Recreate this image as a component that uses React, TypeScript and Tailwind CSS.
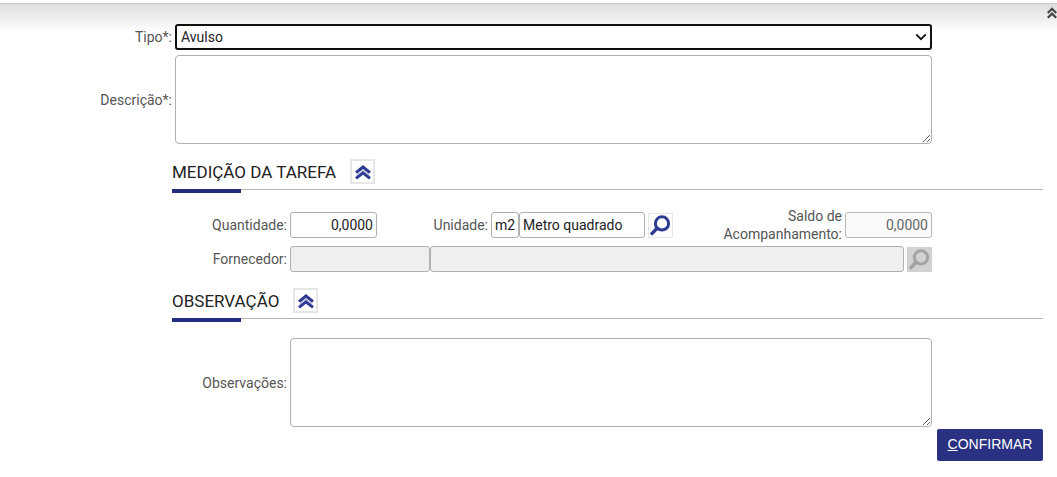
import { useState } from 'react'
import type { ReactNode } from 'react'

const fieldStyle = "h-[26px] min-w-0 rounded-[3px] border border-[#b0b0b0] bg-white text-sm text-[#222] outline-none";

const ChevronsUp = () => (
  <svg viewBox="0 0 16 16" className="h-4 w-4 shrink-0" fill="none" stroke="currentColor" strokeWidth="3" aria-hidden="true">
    <path d="M1 8.6 8 3l7 5.6" />
    <path d="M1 14.4 8 8.8l7 5.6" />
    <path d="M1.5 11.2 8 6l6.5 5.2" strokeWidth="1" opacity="0.4" />
  </svg>
)

const Magnifier = () => (
  <svg viewBox="0 0 25 25" className="h-[25px] w-[25px] shrink-0" fill="none" stroke="currentColor" aria-hidden="true">
    <circle cx="14" cy="10.4" r="6.6" strokeWidth="3" />
    <path d="M9.4 15 2.9 21.6" strokeWidth="3.4" />
  </svg>
)

type SectionProps = {
  title: string
  children: ReactNode
}

const Section = ({ title, children }: SectionProps) => {
  const [open, setOpen] = useState(true);
  return (
    <section>
      <div className="ml-[172px] mr-[14px] border-b border-[#b4b4b4]">
        <div className="flex items-center gap-[14px] pb-[5px]">
          <h2 className="text-[17px] leading-6 text-[#222]">{title}</h2>
          <button
            type="button"
            aria-label={"Recolher " + title}
            aria-expanded={open}
            onClick={() => setOpen(!open)}
            className="flex h-[25px] w-[25px] items-center justify-center border-2 border-[#e6e6e6] bg-white text-[#2f3a92]"
          >
            <ChevronsUp />
          </button>
        </div>
        <div className="-mb-1 h-1 w-[69px] bg-[#232c80]" />
      </div>
      {open && children}
    </section>
  )
}

const App = () => {
  return (
    <div className="relative bg-white font-[Roboto,sans-serif] text-sm text-[#555]">
      <div className="h-1 border-b border-[#c8c8c8]" />
      <button type="button" aria-label="Recolher formulário" className="absolute right-0 top-[7px] text-[#444]">
        <svg viewBox="0 0 10 12" className="h-3 w-[10px]" fill="none" stroke="currentColor" strokeWidth="2.2" aria-hidden="true">
          <path d="M.8 6 5 1.8 9.2 6" />
          <path d="M.8 10.8 5 6.6l4.2 4.2" />
        </svg>
      </button>

      <form
        onSubmit={(e) => e.preventDefault()}
        className="bg-[linear-gradient(#dedede,#ffffff)] bg-[length:100%_28px] bg-no-repeat pb-4 pt-5"
      >
        <div className="mr-[125px] flex items-center gap-[3px]">
          <label htmlFor="tipo" className="w-[172px] shrink-0 text-right">Tipo*:</label>
          <div className="relative flex flex-1">
            <select
              id="tipo"
              className="h-[26px] w-full appearance-none rounded-[3px] border-2 border-[#101010] bg-white px-1 text-sm text-[#222] outline-none"
            >
              <option>Avulso</option>
            </select>
            <svg
              viewBox="0 0 12 8"
              className="pointer-events-none absolute right-[5px] top-[9px] h-2 w-3"
              fill="none"
              stroke="#111"
              strokeWidth="1.8"
              aria-hidden="true"
            >
              <path d="m1.2 1.4 4.8 4.8 4.8-4.8" />
            </svg>
          </div>
        </div>

        <div className="mb-[15px] mr-[125px] mt-[5px] flex items-center gap-[3px]">
          <label htmlFor="descricao" className="w-[172px] shrink-0 text-right">Descrição*:</label>
          <textarea id="descricao" className="h-[89px] flex-1 resize rounded-[4px] border border-[#b0b0b0] bg-white p-1 outline-none" />
        </div>

        <Section title="MEDIÇÃO DA TAREFA">
          <div className="mr-[125px] mt-[17px] flex items-center gap-[3px]">
            <label htmlFor="quantidade" className="w-[287px] shrink-0 text-right">Quantidade:</label>
            <input id="quantidade" defaultValue="0,0000" className={fieldStyle + " w-[87px] px-[3px] text-right"} />
            <label htmlFor="unidade" className="w-[108px] shrink-0 text-right">Unidade:</label>
            <div className="flex">
              <input id="unidade" defaultValue="m2" className={fieldStyle + " w-7 pl-[3px]"} />
              <input aria-label="Nome da unidade" defaultValue="Metro quadrado" className={fieldStyle + " w-[126px] px-[3px]"} />
            </div>
            <button
              type="button"
              aria-label="Buscar unidade"
              className="flex h-[25px] w-[25px] items-center justify-center border border-[#e6e6e6] bg-white text-[#2f3a92]"
            >
              <Magnifier />
            </button>
            <label htmlFor="saldo" className="flex-1 text-right leading-[18px]">
              Saldo de<br />Acompanhamento:
            </label>
            <input id="saldo" defaultValue="0,0000" disabled className="h-[26px] w-[87px] rounded-[3px] border border-[#b8b8b8] bg-[#fafafa] px-[3px] text-right text-sm text-[#666]" />
          </div>

          <div className="mb-4 mr-[125px] mt-[3px] flex items-center gap-[3px]">
            <label htmlFor="fornecedor" className="w-[287px] shrink-0 text-right">Fornecedor:</label>
            <div className="flex flex-1">
              <input id="fornecedor" disabled className="h-[26px] w-[140px] rounded-[3px] border border-[#b0b0b0] bg-[#efefef] px-1" />
              <input aria-label="Nome do fornecedor" disabled className="h-[26px] min-w-0 flex-1 rounded-[3px] border border-[#b0b0b0] bg-[#efefef] px-1" />
            </div>
            <button
              type="button"
              disabled
              aria-label="Buscar fornecedor"
              className="flex h-[25px] w-[25px] items-center justify-center bg-[#d2d2d2] text-[#a3a3a3]"
            >
              <Magnifier />
            </button>
          </div>
        </Section>

        <Section title="OBSERVAÇÃO">
          <div className="mr-[125px] mt-[19px] flex items-center gap-[3px]">
            <label htmlFor="observacoes" className="w-[287px] shrink-0 text-right">Observações:</label>
            <textarea id="observacoes" className="h-[89px] flex-1 resize rounded-[4px] border border-[#b0b0b0] bg-white p-1 outline-none" />
          </div>
        </Section>

        <div className="mr-[14px] mt-[2px] flex justify-end">
          <button
            type="submit"
            className="h-8 w-[106px] rounded-[2px] bg-[#2a3182] pb-[2px] font-['Liberation_Sans',sans-serif] text-sm text-white"
          >
            <span className="underline">C</span>ONFIRMAR
          </button>
        </div>
      </form>
    </div>
  )
}

export default App
